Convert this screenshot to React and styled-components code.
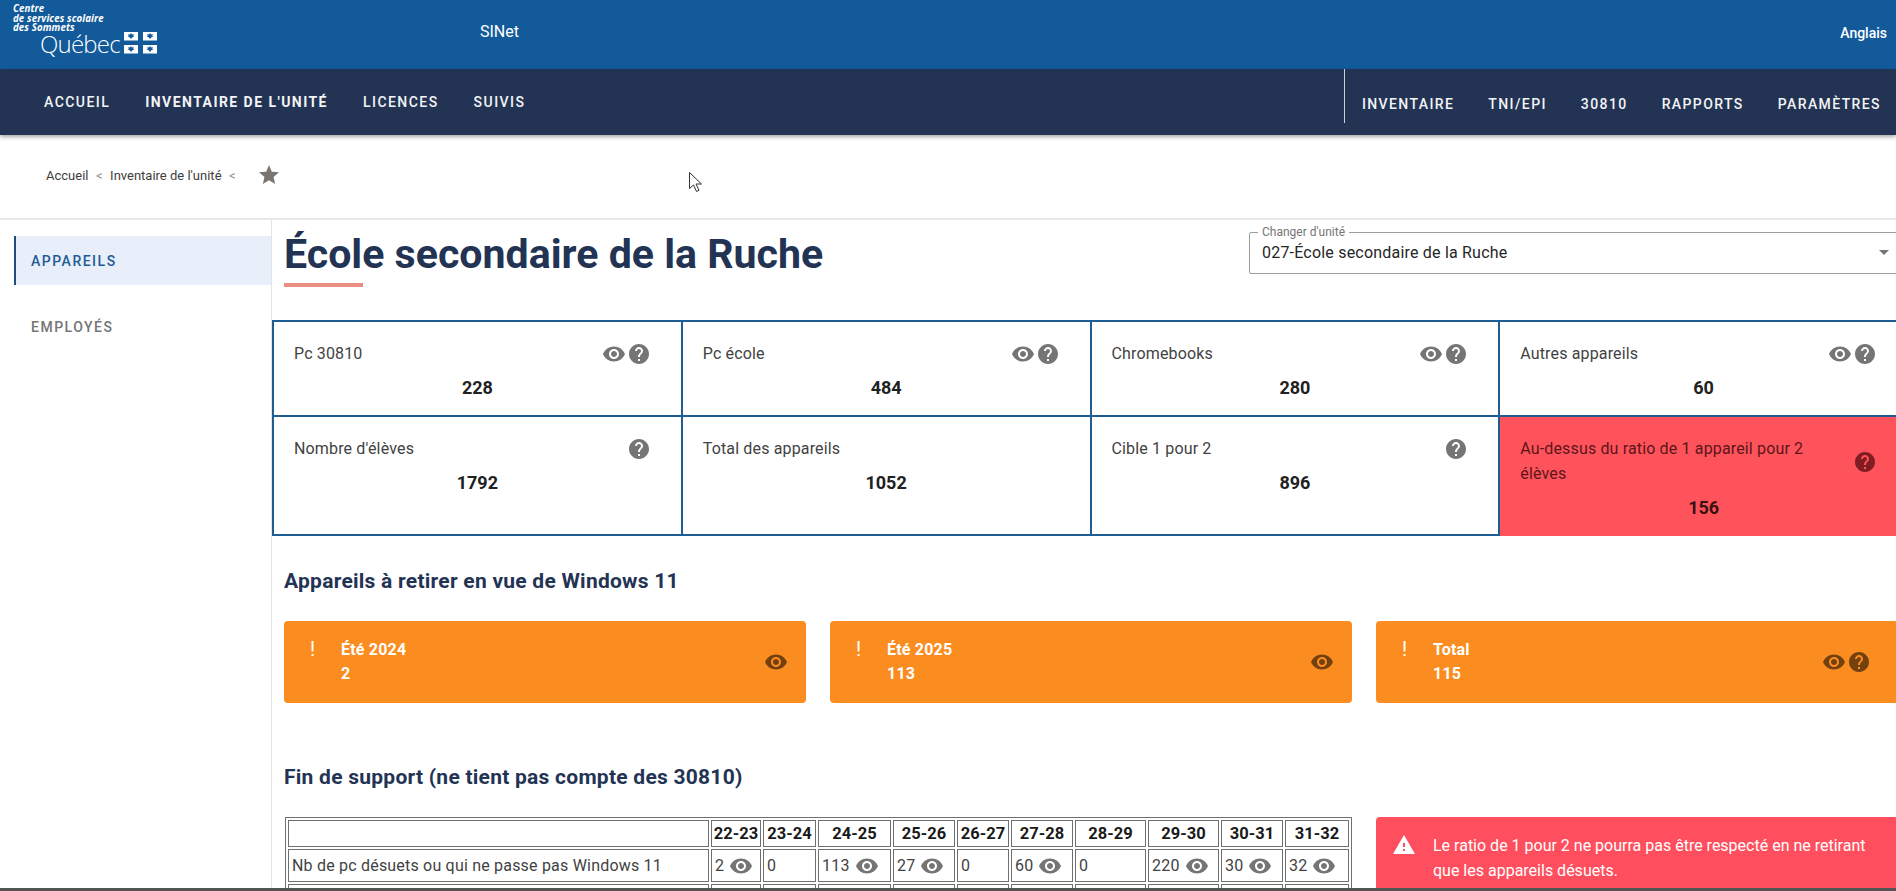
import React from "react";
import styled, { createGlobalStyle } from "styled-components";

const Global = createGlobalStyle`
  html, body { margin: 0; padding: 0; background: #fff; overflow: hidden; }
  body { font-family: Roboto, "Liberation Sans", sans-serif; color: #222; }
  * { box-sizing: border-box; }
`;

const Page = styled.div`
  position: relative;
  width: 1896px;
  height: 891px;
  overflow: hidden;
  background: #fff;
`;

const TopBar = styled.header`
  height: 69px;
  background: #125a9a;
  color: #fff;
  display: flex;
  align-items: flex-start;
  padding: 4px 9px 0 13px;
`;
const Logo = styled.div`
  width: 467px;
  flex: none;
`;
const LogoLines = styled.div`
  font: italic 700 9.7px/9.6px "Open Sans", sans-serif;
  letter-spacing: 0.1px;
`;
const LogoRow = styled.div`
  display: flex;
  align-items: flex-start;
  gap: 4px;
  padding-left: 27px;
`;
const LogoWord = styled.span`
  font: 300 24px/22px "Open Sans", sans-serif;
  letter-spacing: -0.8px;
`;
const FlagSvg = styled.svg`
  margin-top: -1px;
  flex: none;
`;
const AppName = styled.div`
  font-size: 16px;
  line-height: 20px;
  margin-top: 18px;
  flex: 1;
`;
const Lang = styled.div`
  font-size: 14px;
  font-weight: 500;
  line-height: 20px;
  margin-top: 19px;
`;

const NavBar = styled.nav`
  position: relative;
  z-index: 1;
  height: 66px;
  background: #233354;
  box-shadow: 0 2px 4px rgba(0,0,0,.35);
  display: flex;
  justify-content: space-between;
  padding: 0 15px 0 44px;
`;
const NavGroup = styled.div`
  display: flex;
  gap: ${p => p.$right ? 34 : 35}px;
  height: 54px;
  align-items: center;
  padding-top: ${p => p.$right ? 15 : 11}px;
  letter-spacing: ${p => p.$right ? 1.4 : 1.45}px;
  ${p => p.$right && "border-left: 1px solid #c9ced8; padding-left: 17px;"}
`;
const NavLink = styled.a`
  color: #f3f4f6;
  font-size: 14px;
  font-weight: ${p => p.$active ? 700 : 500};
  text-transform: uppercase;
  white-space: nowrap;
`;

const Crumbs = styled.div`
  height: 85px;
  border-bottom: 2px solid #e8e8e8;
  display: flex;
  align-items: center;
  padding: 0 0 3px 46px;
  font-size: 13px;
  color: #3d3d3d;
`;
const CrumbSep = styled.span`
  color: #8c8c8c;
  margin: 0 7.5px;
`;
const StarWrap = styled.span`
  display: flex;
  margin-left: 14px;
  color: #7c7471;
`;

const Body = styled.div`
  display: flex;
  align-items: flex-start;
`;
const Side = styled.aside`
  flex: none;
  width: 272px;
  height: 680px;
  border-right: 1px solid #e4e4e4;
  padding: 16px 0 0 14px;
`;
const SideItem = styled.div`
  height: 49px;
  display: flex;
  align-items: center;
  padding-left: ${p => p.$active ? 15 : 17}px;
  margin-bottom: 17px;
  font-size: 14px;
  font-weight: 500;
  letter-spacing: 1.5px;
  color: ${p => p.$active ? "#1f5c94" : "#757575"};
  ${p => p.$active && "background: #e8eefa; border-left: 2px solid #1c4f80;"}
`;

const Main = styled.main`
  flex: none;
  width: 1637px;
`;
const TitleRow = styled.div`
  height: 100px;
  display: flex;
  justify-content: space-between;
  padding-left: 12px;
`;
const TitleBlock = styled.div`
  padding-top: 11px;
`;
const Title = styled.h1`
  margin: 0;
  font-size: 41.1px;
  line-height: 46px;
  font-weight: 700;
  color: #233354;
  white-space: nowrap;
`;
const TitleRule = styled.div`
  width: 79px;
  height: 4px;
  margin-top: 6px;
  background: #e98f82;
`;
const SelectSlot = styled.div`
  padding-top: 12px;
`;
const SelectBox = styled.div`
  position: relative;
  width: 660px;
  height: 42px;
  border: 1px solid #9e9e9e;
  border-radius: 2px;
  padding: 9px 0 0 12px;
  font-size: 16px;
  letter-spacing: 0.2px;
  line-height: 22px;
  color: #262626;
`;
const SelectLegend = styled.span`
  position: absolute;
  top: -7px;
  left: 8px;
  padding: 0 4px;
  background: #fff;
  font-size: 12px;
  letter-spacing: 0;
  line-height: 13px;
  color: #757575;
`;
const SelectCaret = styled.span`
  position: absolute;
  left: 629px;
  top: 17px;
  border-left: 5px solid transparent;
  border-right: 5px solid transparent;
  border-top: 5px solid #757575;
`;

const CardGrid = styled.div`
  display: grid;
  grid-template-columns: repeat(4, 1fr);
  grid-template-rows: 95px 119px;
  border-top: 2px solid #1f5c94;
  border-left: 2px solid #1f5c94;
`;
const Card = styled.div`
  padding-top: 20px;
  border-right: 2px solid ${p => p.$alert ? "#ff535c" : "#1f5c94"};
  border-bottom: 2px solid ${p => p.$alert ? "#ff535c" : "#1f5c94"};
  background: ${p => p.$alert ? "#ff535c" : "#fff"};
  color: ${p => p.$alert ? "#5c1519" : "#424242"};
`;
const CardHead = styled.div`
  display: flex;
  justify-content: space-between;
  align-items: ${p => p.$alert ? "center" : "flex-start"};
  min-height: 24px;
  padding: 0 30px 0 20px;
`;
const CardLabel = styled.div`
  margin-top: -1px;
  font-size: 16px;
  letter-spacing: 0.15px;
  line-height: 25px;
  max-width: ${p => p.$alert ? "300px" : "none"};
`;
const GreyIcons = styled.div`
  display: flex;
  flex: none;
  gap: 1px;
  color: ${p => p.$alert ? "#7f1d22" : "#757575"};
`;
const CardValue = styled.div`
  text-align: center;
  margin-top: 10px;
  font-size: 18px;
  font-weight: 700;
  line-height: 24px;
  color: ${p => p.$alert ? "#3a1012" : "#212121"};
`;

const Section = styled.section`
  padding-left: 12px;
`;
const SectionTitle = styled.h2`
  margin: ${p => p.$top}px 0 0;
  font-size: 21px;
  line-height: 28px;
  font-weight: 700;
  letter-spacing: 0.25px;
  color: #233354;
`;
const Alerts = styled.div`
  display: grid;
  grid-template-columns: repeat(3, 522px);
  gap: 24px;
  margin-top: 26px;
`;
const AlertCard = styled.div`
  height: 82px;
  border-radius: 4px;
  background: #fb8c1f;
  color: #fff;
  display: flex;
  align-items: center;
  padding: 0 ${p => p.$wide ? 27 : 18}px 0 26px;
`;
const Bang = styled.span`
  width: 31px;
  flex: none;
  align-self: flex-start;
  margin-top: 16px;
  font-size: 20px;
  line-height: 24px;
  font-weight: 400;
`;
const AlertText = styled.div`
  flex: 1;
  font-size: 16px;
  letter-spacing: 0.2px;
  font-weight: 700;
  line-height: 24px;
`;
const DarkIcons = styled.div`
  display: flex;
  gap: 1px;
  color: rgba(0,0,0,.54);
`;

const Lower = styled.div`
  display: flex;
  gap: 24px;
  margin-top: 26px;
  padding-left: 1px;
`;
const SupportTable = styled.table`
  width: 1067px;
  flex: none;
  table-layout: fixed;
  border: 1px solid #707070;
  border-spacing: 2px;
  font-size: 16px;
`;
const Col = styled.col`
  width: ${p => p.$w}px;
`;
const Th = styled.th`
  border: 1px solid #707070;
  height: 27px;
  padding: 0;
  font-weight: 700;
  font-size: 16.5px;
  color: #1a1a1a;
  text-align: center;
  white-space: nowrap;
`;
const Td = styled.td`
  border: 1px solid #707070;
  height: 33px;
  padding: 0 3px;
  letter-spacing: 0.2px;
  color: #424242;
  white-space: nowrap;
  vertical-align: middle;
`;
const CellInner = styled.span`
  display: inline-flex;
  align-items: center;
  gap: 5px;
  color: #757575;
`;
const CellNum = styled.span`
  color: #424242;
`;
const RedAlert = styled.div`
  flex: none;
  width: 522px;
  height: 90px;
  border-radius: 4px;
  background: #ff4f5e;
  color: #fff;
  display: flex;
  padding: 16px 14px 0 16px;
  font-size: 16px;
  line-height: 25px;
`;
const RedIcon = styled.span`
  flex: none;
  width: 41px;
  display: flex;
`;
const BottomEdge = styled.div`
  position: absolute;
  left: 0;
  right: 0;
  bottom: 0;
  height: 3px;
  background: #555;
`;
const Cursor = styled.svg`
  position: absolute;
  left: 688px;
  top: 171px;
`;

const Eye = () => (
  <svg width="24" height="24" viewBox="0 0 24 24" fill="currentColor">
    <path d="M12 4.5C7 4.5 2.73 7.61 1 12c1.73 4.39 6 7.5 11 7.5s9.27-3.11 11-7.5c-1.73-4.39-6-7.5-11-7.5zM12 17c-2.76 0-5-2.24-5-5s2.24-5 5-5 5 2.24 5 5-2.24 5-5 5zm0-8c-1.66 0-3 1.34-3 3s1.34 3 3 3 3-1.34 3-3-1.34-3-3-3z" />
  </svg>
);
const Help = () => (
  <svg width="24" height="24" viewBox="0 0 24 24" fill="currentColor">
    <path d="M12 2C6.48 2 2 6.48 2 12s4.48 10 10 10 10-4.48 10-10S17.52 2 12 2zm1 17h-2v-2h2v2zm2.07-7.75l-.9.92C13.45 12.9 13 13.5 13 15h-2v-.5c0-1.1.45-2.1 1.17-2.83l1.24-1.26c.37-.36.59-.86.59-1.41 0-1.1-.9-2-2-2s-2 .9-2 2H8c0-2.21 1.79-4 4-4s4 1.79 4 4c0 .88-.36 1.68-.93 2.25z" />
  </svg>
);

const Flag = () => (
  <FlagSvg width="33" height="22" viewBox="0 0 33 22">
    {[[0, 0], [19, 0], [0, 13], [19, 13]].map(([x, y]) => (
      <g key={`${x}-${y}`}>
        <rect x={x} y={y} width="14" height="8.5" fill="#fff" />
        <path
          d={`M${x + 7} ${y + 1}l1 1.6 1.8-.5-.5 1.7 1.2.7-1.8.5-1.7 2-1.7-2-1.8-.5 1.2-.7-.5-1.7 1.8.5z`}
          fill="#125a9a"
        />
      </g>
    ))}
  </FlagSvg>
);

const cards = [
  { label: "Pc 30810", value: 228, eye: true, help: true },
  { label: "Pc école", value: 484, eye: true, help: true },
  { label: "Chromebooks", value: 280, eye: true, help: true },
  { label: "Autres appareils", value: 60, eye: true, help: true },
  { label: "Nombre d'élèves", value: 1792, help: true },
  { label: "Total des appareils", value: 1052 },
  { label: "Cible 1 pour 2", value: 896, help: true },
  { label: "Au-dessus du ratio de 1 appareil pour 2 élèves", value: 156, help: true, alert: true },
];

const alerts = [
  { label: "Été 2024", value: 2 },
  { label: "Été 2025", value: 113 },
  { label: "Total", value: 115, help: true },
];

const years = [
  { y: "22-23", w: 50, v: 2, eye: true },
  { y: "23-24", w: 53, v: 0 },
  { y: "24-25", w: 73, v: 113, eye: true },
  { y: "25-26", w: 62, v: 27, eye: true },
  { y: "26-27", w: 52, v: 0 },
  { y: "27-28", w: 62, v: 60, eye: true },
  { y: "28-29", w: 71, v: 0 },
  { y: "29-30", w: 71, v: 220, eye: true },
  { y: "30-31", w: 62, v: 30, eye: true },
  { y: "31-32", w: 64, v: 32, eye: true },
];

export default function App() {
  return (
    <Page>
      <Global />
      <TopBar>
        <Logo>
          <LogoLines>
            Centre<br />de services scolaire<br />des Sommets
          </LogoLines>
          <LogoRow>
            <LogoWord>Québec</LogoWord>
            <Flag />
          </LogoRow>
        </Logo>
        <AppName>SINet</AppName>
        <Lang>Anglais</Lang>
      </TopBar>
      <NavBar>
        <NavGroup>
          <NavLink>Accueil</NavLink>
          <NavLink $active>Inventaire de l'unité</NavLink>
          <NavLink>Licences</NavLink>
          <NavLink>Suivis</NavLink>
        </NavGroup>
        <NavGroup $right>
          <NavLink>Inventaire</NavLink>
          <NavLink>TNI/EPI</NavLink>
          <NavLink>30810</NavLink>
          <NavLink>Rapports</NavLink>
          <NavLink>Paramètres</NavLink>
        </NavGroup>
      </NavBar>
      <Crumbs>
        Accueil<CrumbSep>&lt;</CrumbSep>Inventaire de l'unité<CrumbSep>&lt;</CrumbSep>
        <StarWrap>
          <svg width="24" height="24" viewBox="0 0 24 24" fill="currentColor">
            <path d="M12 17.27L18.18 21l-1.64-7.03L22 9.24l-7.19-.61L12 2 9.19 8.63 2 9.24l5.46 4.73L5.82 21z" />
          </svg>
        </StarWrap>
      </Crumbs>
      <Body>
        <Side>
          <SideItem $active>APPAREILS</SideItem>
          <SideItem>EMPLOYÉS</SideItem>
        </Side>
        <Main>
          <TitleRow>
            <TitleBlock>
              <Title>École secondaire de la Ruche</Title>
              <TitleRule />
            </TitleBlock>
            <SelectSlot>
              <SelectBox>
                <SelectLegend>Changer d'unité</SelectLegend>
                027-École secondaire de la Ruche
                <SelectCaret />
              </SelectBox>
            </SelectSlot>
          </TitleRow>
          <CardGrid>
            {cards.map(c => (
              <Card key={c.label} $alert={c.alert}>
                <CardHead $alert={c.alert}>
                  <CardLabel $alert={c.alert}>{c.label}</CardLabel>
                  <GreyIcons $alert={c.alert}>
                    {c.eye && <Eye />}
                    {c.help && <Help />}
                  </GreyIcons>
                </CardHead>
                <CardValue $alert={c.alert}>{c.value}</CardValue>
              </Card>
            ))}
          </CardGrid>
          <Section>
            <SectionTitle $top={31}>Appareils à retirer en vue de Windows 11</SectionTitle>
            <Alerts>
              {alerts.map(a => (
                <AlertCard key={a.label} $wide={a.help}>
                  <Bang>!</Bang>
                  <AlertText>{a.label}<br />{a.value}</AlertText>
                  <DarkIcons>
                    <Eye />
                    {a.help && <Help />}
                  </DarkIcons>
                </AlertCard>
              ))}
            </Alerts>
            <SectionTitle $top={60}>Fin de support (ne tient pas compte des 30810)</SectionTitle>
            <Lower>
              <SupportTable>
                <colgroup>
                  <col />
                  {years.map(r => <Col key={r.y} $w={r.w} />)}
                </colgroup>
                <tbody>
                  <tr>
                    <Th />
                    {years.map(r => <Th key={r.y}>{r.y}</Th>)}
                  </tr>
                  <tr>
                    <Td>Nb de pc désuets ou qui ne passe pas Windows 11</Td>
                    {years.map(r => (
                      <Td key={r.y}>
                        <CellInner>
                          <CellNum>{r.v}</CellNum>
                          {r.eye && <Eye />}
                        </CellInner>
                      </Td>
                    ))}
                  </tr>
                  <tr>
                    <Td />
                    {years.map(r => <Td key={r.y} />)}
                  </tr>
                </tbody>
              </SupportTable>
              <RedAlert>
                <RedIcon>
                  <svg width="24" height="24" viewBox="0 0 24 24" fill="currentColor">
                    <path d="M1 21h22L12 2 1 21zm12-3h-2v-2h2v2zm0-4h-2v-4h2v4z" />
                  </svg>
                </RedIcon>
                <span>Le ratio de 1 pour 2 ne pourra pas être respecté en ne retirant que les appareils désuets.</span>
              </RedAlert>
            </Lower>
          </Section>
        </Main>
      </Body>
      <BottomEdge />
      <Cursor width="16" height="24" viewBox="0 0 16 24" fill="#fff" stroke="#333" strokeWidth="1">
        <path d="M1.5 1.5v16l4-3.5 3 6.5 2.5-1.2-3-6.3h5.5z" />
      </Cursor>
    </Page>
  );
}
